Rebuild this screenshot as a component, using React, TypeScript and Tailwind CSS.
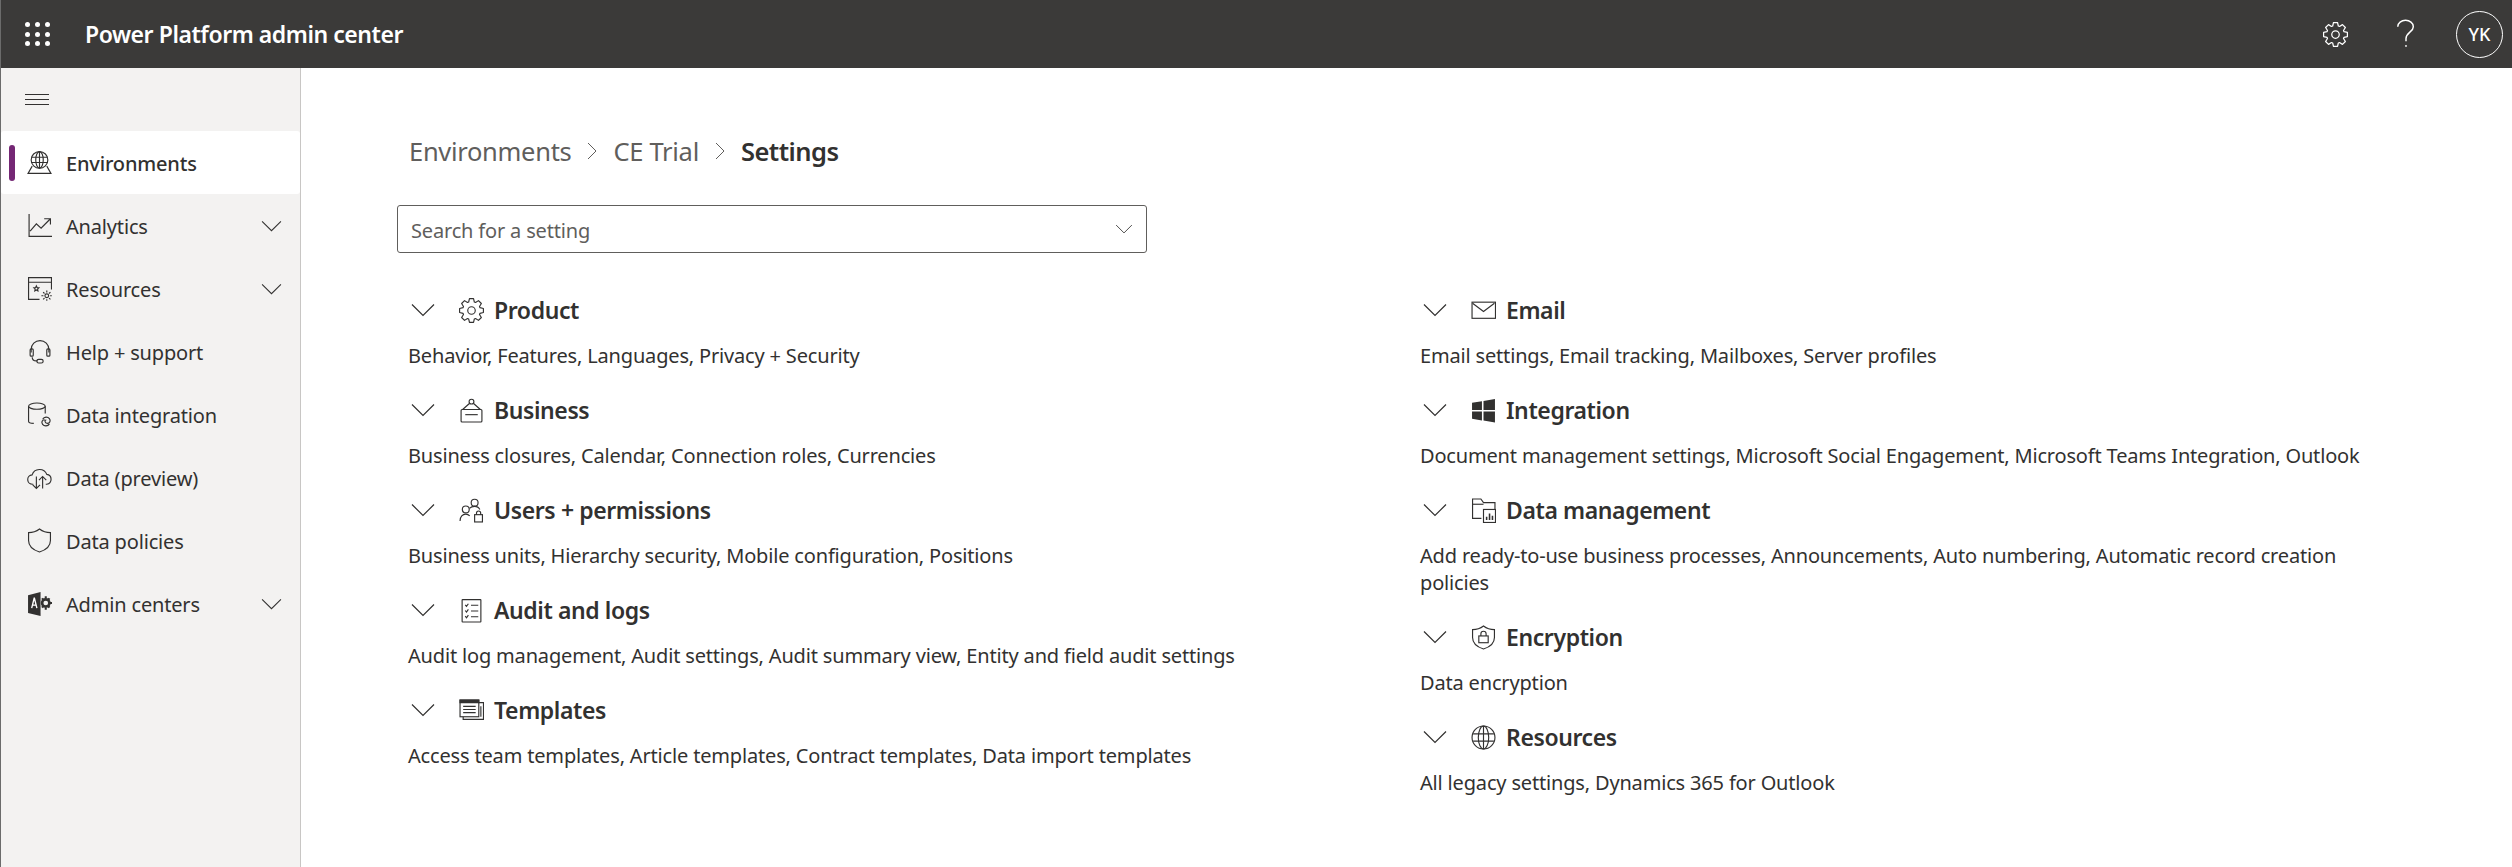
import React from "react";

const ink = "#323130";

type IconProps = { className?: string };

const Chevron = ({ className = "w-[24px] h-[14px]" }: IconProps) => (
  <svg viewBox="0 0 24 14" className={className} fill="none" stroke={ink} strokeWidth="1.2">
    <path d="M1 1.5 12 12.5 23 1.5" />
  </svg>
);

const Svg = ({ children, size = "w-[25px] h-[25px]" }: { children: React.ReactNode; size?: string }) => (
  <svg viewBox="0 0 24 24" className={`${size} shrink-0`} fill="none" stroke={ink} strokeWidth="1.1">
    {children}
  </svg>
);

// eight-toothed gear outline
const gearOutline = () => {
  const pts: string[] = [];
  for (let i = 0; i < 8; i++) {
    const a = (i * Math.PI) / 4 - Math.PI / 2;
    const at = (r: number, d: number) => {
      const x = 12 + r * Math.cos(a + d);
      const y = 12 + r * Math.sin(a + d);
      return `${x.toFixed(2)} ${y.toFixed(2)}`;
    };
    pts.push(`${i === 0 ? "M" : "L"}${at(8.6, -0.32)}`, `L${at(11.6, -0.17)}`, `L${at(11.6, 0.17)}`, `L${at(8.6, 0.32)}`);
  }
  return pts.join(" ") + "Z";
};

const GearPath = () => (
  <>
    <path d={gearOutline()} strokeLinejoin="round" />
    <circle cx="12" cy="12" r="3.6" />
  </>
);

const Globe = () => (
  <>
    <circle cx="12" cy="12" r="11" />
    <ellipse cx="12" cy="12" rx="5" ry="11" />
    <path d="M2 8.5h20M2 15.5h20M12 1v22" />
  </>
);

const icons: Record<string, React.ReactNode> = {
  environments: (
    <>
      <circle cx="12" cy="9.5" r="8" />
      <ellipse cx="12" cy="9.5" rx="3.6" ry="8" />
      <path d="M4 7h16M4 12h16M12 1.5v16" />
      <path d="M5 15.5 1 22.5h22l-4-7" />
    </>
  ),
  analytics: <path d="M2 1v21.5h22M3 17.5l6-7 4.5 4L22 6M16.5 5.5H22.5V11" />,
  resources: (
    <>
      <path d="M12 22.500H1.500v-21h22V13M1.500 6h22" />
      <path d="M9 9.500l.7 1.600 1.700.2-1.200 1.200.3 1.800-1.500-.9-1.500.9.3-1.800-1.200-1.200 1.700-.2z" />
      <circle cx="19" cy="19" r="1.800" />
      <path d="M19 13.800v2M19 22.200v1.600M13.800 19h2M22.200 19h1.600M15.500 15.500l1.300 1.300M21.200 21.200l1.300 1.300M22.500 15.500l-1.300 1.300M16.800 21.200l-1.300 1.300" />
    </>
  ),
  help: (
    <>
      <path d="M4 13V10a8.500 8.500 0 0 1 17 0v3M5 17.500c0 2.500 2 3.500 4 3.500h1" />
      <rect x="3" y="9.500" width="3" height="7" rx="1" />
      <rect x="19" y="9.500" width="3" height="7" rx="1" />
      <rect x="9.500" y="19.500" width="6" height="3.500" rx="1.700" />
    </>
  ),
  integration: (
    <>
      <ellipse cx="9.500" cy="4" rx="8" ry="3" />
      <path d="M1.500 4v14.500c0 1.500 2 2 5 2M17.500 4v7" />
      <path d="M13 15.500c1.500-2.500 5-2.500 6.500-.5s.5 4.500-2 4.500-3-3-1-3.500M19.500 20c-1.500 2.500-5 2.500-6.500.5s-.5-4.500 2-4.500" transform="translate(2 1)" />
    </>
  ),
  preview: (
    <>
      <path d="M6 18.500H5.500a4.500 4.500 0 0 1-.6-9A7.500 7.500 0 0 1 19 9a4.800 4.800 0 0 1 0 9.500h-1" />
      <path d="M9 11v11.500M5.500 19l3.500 3.500 3.500-3.500M15 22.500V11M11.500 14.500 15 11l3.500 3.500" />
    </>
  ),
  policies: <path d="M12 1c3 2.300 6.500 3.500 10.500 3.500V12c0 5-4 9-10.500 11C5.500 21 1.500 17 1.500 12V4.500C5.500 4.500 9 3.300 12 1z" />,
  admin: (
    <>
      <path d="M1 4 13 1v23L1 21z" fill="#323130" stroke="none" />
      <path d="M7 6.500 4.500 16.500M7 6.500l2.500 10M5.300 13.500h3.400" stroke="#fff" strokeWidth="1.300" />
      <circle cx="18" cy="11.500" r="3.500" stroke="#323130" strokeWidth="2.500" />
      <path d="M18 5v2M18 16v2M24 11.500h-2M14.500 7l1 1.500M21.500 7l-1 1.500M21.500 16l-1-1.500M14.500 16l1-1.500" strokeWidth="2" />
    </>
  ),
  product: <GearPath />,
  business: (
    <>
      <circle cx="12" cy="3.500" r="2.300" />
      <path d="M10 5.300 3.500 11M14 5.300 20.500 11" />
      <rect x="2" y="11" width="20" height="12" rx="1" />
      <path d="M6 16h12" />
    </>
  ),
  users: (
    <>
      <circle cx="15" cy="4.500" r="3.300" />
      <circle cx="6.500" cy="11" r="3.300" />
      <path d="M1 22c0-4 2.500-6.500 5.500-6.500 1.500 0 2.800.6 3.800 1.600M10 10c1.500-1.500 3-2 5-2s4 1 5 3" />
      <rect x="15" y="16" width="7.500" height="7" />
      <path d="M16.800 16v-1.500a2 2 0 0 1 4 0V16" />
    </>
  ),
  audit: (
    <>
      <rect x="3" y="1.500" width="18" height="21.500" rx=".5" />
      <path d="M6 6.500 7.200 8 9 5.500M6 12 7.200 13.500 9 11M6 17.500 7.200 19 9 16.500M11.500 7h7M11.500 12.500h7M11.500 18h7" />
    </>
  ),
  templates: (
    <>
      <rect x="1" y="2" width="18" height="16" />
      <path d="M1 2h18v2.500H1z" fill="#323130" />
      <path d="M4 8h12M4 11h12M4 14h12M19 4.500h4.500V20.500H4V18" />
      <path d="M21 8v10" />
    </>
  ),
  email: (
    <>
      <rect x="1" y="4" width="22.500" height="15.500" />
      <path d="M1.500 5 12 13l10.500-8" />
    </>
  ),
  windows: <path d="M1 4.500 10.500 3v8.500H1zM12 2.800 23 1v10.500H12zM1 13h9.500v8.500L1 20zM12 13h11v10.500l-11-1.800z" fill="#323130" stroke="none" />,
  data: (
    <>
      <path d="M10 19.500H1.500V1h8l2.500 3.500h11V11" />
      <path d="M1.500 6h10.500" />
      <rect x="12" y="11" width="11.500" height="12.500" />
      <path d="M15 21v-3M17.800 21v-6M20.600 21v-4" strokeWidth="1.500" />
    </>
  ),
  encryption: (
    <>
      <path d="M12 1c3 2.300 6.500 3.500 10.500 3.500V12c0 5-4 9-10.500 11C5.500 21 1.500 17 1.500 12V4.500C5.500 4.500 9 3.300 12 1z" />
      <rect x="7.500" y="10.500" width="9" height="6.500" />
      <path d="M9.500 10.500V8.500a2.500 2.500 0 0 1 5 0v2" />
    </>
  ),
  globe: <Globe />,
};

type NavItem = { label: string; icon: string; expandable?: boolean; active?: boolean };

const navItems: NavItem[] = [
  { label: "Environments", icon: "environments", active: true },
  { label: "Analytics", icon: "analytics", expandable: true },
  { label: "Resources", icon: "resources", expandable: true },
  { label: "Help + support", icon: "help" },
  { label: "Data integration", icon: "integration" },
  { label: "Data (preview)", icon: "preview" },
  { label: "Data policies", icon: "policies" },
  { label: "Admin centers", icon: "admin", expandable: true },
];

type SectionData = { title: string; icon: string; text: string };

const leftSections: SectionData[] = [
  { title: "Product", icon: "product", text: "Behavior, Features, Languages, Privacy + Security" },
  { title: "Business", icon: "business", text: "Business closures, Calendar, Connection roles, Currencies" },
  { title: "Users + permissions", icon: "users", text: "Business units, Hierarchy security, Mobile configuration, Positions" },
  { title: "Audit and logs", icon: "audit", text: "Audit log management, Audit settings, Audit summary view, Entity and field audit settings" },
  { title: "Templates", icon: "templates", text: "Access team templates, Article templates, Contract templates, Data import templates" },
];

const rightSections: SectionData[] = [
  { title: "Email", icon: "email", text: "Email settings, Email tracking, Mailboxes, Server profiles" },
  { title: "Integration", icon: "windows", text: "Document management settings, Microsoft Social Engagement, Microsoft Teams Integration, Outlook" },
  { title: "Data management", icon: "data", text: "Add ready-to-use business processes, Announcements, Auto numbering, Automatic record creation policies" },
  { title: "Encryption", icon: "encryption", text: "Data encryption" },
  { title: "Resources", icon: "globe", text: "All legacy settings, Dynamics 365 for Outlook" },
];

const Section = ({ title, icon, text }: SectionData) => (
  <section className="mb-[18px]">
    <div className="flex h-[46px] items-center pl-[3px]">
      <Chevron />
      <span className="ml-[23px] mr-[10px] flex w-[26px] justify-center">
        <Svg>{icons[icon]}</Svg>
      </span>
      <h2 className="text-[23px] font-semibold tracking-[-0.4px] text-[#323130]">{title}</h2>
    </div>
    <p className="mt-[9px] text-[20px] leading-[27px] tracking-[-0.17px] text-[#323130]">{text}</p>
  </section>
);

const Header = () => (
  <header className="flex h-[68px] shrink-0 items-center bg-[#3b3a39] text-white">
    <div className="ml-[24px] grid w-[25px] grid-cols-3 gap-x-[4.500px] gap-y-[4.500px]">
      {Array.from({ length: 9 }).map((_, i) => (
        <span key={i} className="h-[5px] w-[5px] rounded-full bg-white" />
      ))}
    </div>
    <h1 className="ml-[35px] text-[23px] font-semibold tracking-[-0.45px]">Power Platform admin center</h1>
    <div className="ml-auto flex items-center">
      <svg viewBox="0 0 24 24" className="h-[25px] w-[25px]" fill="none" stroke="#fff" strokeWidth="1.200">
        <GearPath />
      </svg>
      <svg viewBox="0 0 24 32" className="ml-[47px] h-[30px] w-[22px]" fill="none" stroke="#fff" strokeWidth="1.600">
        <path d="M3 8c0-4 4-7 8.500-7S20 4 20 8c0 6-8 6-8 13v3" />
        <circle cx="12" cy="29" r="1" fill="#fff" stroke="none" />
      </svg>
      <div className="ml-[39px] mr-[9px] flex h-[47px] w-[47px] items-center justify-center rounded-full border border-white text-[18px] font-medium">
        YK
      </div>
    </div>
  </header>
);

const Sidebar = () => (
  <aside className="flex w-[300px] shrink-0 flex-col border-r border-[#c8c6c4] bg-[#f3f2f1] text-[#323130]">
    <div className="flex h-[63px] items-center pl-[24px]">
      <div className="flex w-[24px] flex-col gap-[4px]">
        <span className="h-px bg-[#323130]" />
        <span className="h-px bg-[#323130]" />
        <span className="h-px bg-[#323130]" />
      </div>
    </div>
    {navItems.map((item) => (
      <div
        key={item.label}
        className={`relative flex h-[63px] items-center pl-[26px] pr-[18px] text-[20px] tracking-[-0.17px] ${
          item.active ? "rounded-[3px] bg-white font-medium" : ""
        }`}
      >
        {item.active && <span className="absolute left-[8px] top-[14px] h-[36px] w-[6px] rounded-full bg-[#742774]" />}
        <Svg>{icons[item.icon]}</Svg>
        <span className="ml-[14px] pt-[3px]">{item.label}</span>
        {item.expandable && <Chevron className="ml-auto h-[12px] w-[21px]" />}
      </div>
    ))}
  </aside>
);

const Crumb = () => (
  <svg viewBox="0 0 10 18" className="mx-[16px] h-[18px] w-[10px]" fill="none" stroke="#605e5c" strokeWidth="1">
    <path d="M1 1l8 8-8 8" />
  </svg>
);

export default function App() {
  return (
    <div className="flex h-[867px] w-[2512px] flex-col overflow-hidden border-l border-[#6b6b6b] bg-white font-['Noto_Sans','Open_Sans',sans-serif]">
      <Header />
      <div className="flex min-h-0 flex-1">
        <Sidebar />
        <main className="flex-1 pl-[96px] pt-[63px]">
          <nav className="flex h-[40px] items-center pl-[12px] text-[25.5px] tracking-[-0.3px] text-[#605e5c]">
            <span>Environments</span>
            <Crumb />
            <span>CE Trial</span>
            <Crumb />
            <span className="font-semibold tracking-[-0.5px] text-[#323130]">Settings</span>
          </nav>
          <div className="mt-[34px] flex h-[48px] w-[750px] items-center justify-between rounded-[3px] border border-[#605e5c] pl-[13px] pr-[13px] text-[20px] tracking-[-0.17px] text-[#605e5c]">
            <span className="pt-[3px]">Search for a setting</span>
            <Chevron className="h-[10px] w-[18px]" />
          </div>
          <div className="mt-[34px] grid grid-cols-[1012px_970px] pl-[11px]">
            <div>
              {leftSections.map((s) => (
                <Section key={s.title} {...s} />
              ))}
            </div>
            <div>
              {rightSections.map((s) => (
                <Section key={s.title} {...s} />
              ))}
            </div>
          </div>
        </main>
      </div>
    </div>
  );
}
